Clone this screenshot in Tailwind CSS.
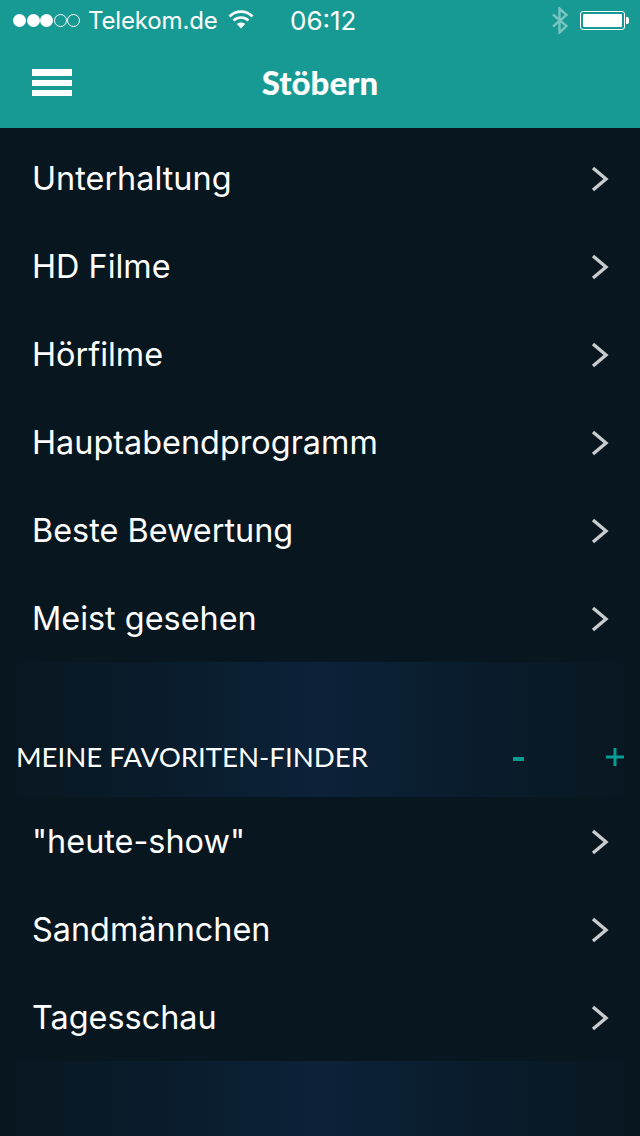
<!DOCTYPE html>
<html lang="de">
<head>
<meta charset="utf-8">
<script src="https://cdn.jsdelivr.net/npm/@tailwindcss/browser@4"></script>
</head>
<body class="w-[640px] h-[1136px] overflow-hidden bg-[#08161f] font-['Inter','Liberation_Sans',sans-serif] text-white">
<header class="h-[128px] bg-[#169a93] relative">
  <div class="h-[40px] flex items-center pl-[13px] relative">
    <div class="flex gap-[0.5px] items-center">
      <span class="w-[13px] h-[13px] rounded-full bg-white"></span>
      <span class="w-[13px] h-[13px] rounded-full bg-white"></span>
      <span class="w-[13px] h-[13px] rounded-full bg-white"></span>
      <span class="w-[13px] h-[13px] rounded-full border border-white"></span>
      <span class="w-[13px] h-[13px] rounded-full border border-white"></span>
    </div>
    <span class="ml-[8px] text-[24px] leading-[40px] font-normal tracking-[-0.15px] mt-[2px]">Telekom.de</span>
    <svg class="ml-[10px] -mt-[3px]" width="26" height="20" viewBox="0 0 26 20" fill="none"><path d="M1.5 7.5C8 1 18 1 24.5 7.5" stroke="white" stroke-width="2.6"/><path d="M5.5 11.5C10 7.5 16 7.5 20.5 11.5" stroke="white" stroke-width="2.6"/><path d="M13 19.5L8.8 15C11 13 15 13 17.2 15Z" fill="white"/></svg>
    <span class="absolute left-[290px] top-[1px] text-[26px] leading-[40px]">06:12</span>
    <svg class="absolute left-[551px] top-[7px]" width="18" height="27" viewBox="0 0 18 27" fill="none"><path d="M2 7.5L15.5 19L8.5 25.5V1.5L15.5 8L2 19.5" stroke="white" stroke-opacity="0.42" stroke-width="2.4"/></svg>
    <div class="absolute left-[580px] top-[11px] w-[45px] h-[19px] rounded-[3px] border border-white p-[2px]"><div class="w-full h-full bg-white rounded-[1px]"></div></div>
    <div class="absolute left-[626px] top-[17px] w-[3px] h-[7px] bg-white rounded-r-[2px]"></div>
  </div>
  <div class="h-[88px] relative flex items-center justify-center">
    <div class="absolute left-[32px] top-[29px] w-[40px] flex flex-col gap-[4px]">
      <span class="h-[7px] bg-white"></span>
      <span class="h-[6px] bg-white"></span>
      <span class="h-[6px] bg-white"></span>
    </div>
    <h1 class="font-['Lato',sans-serif] font-black text-[33px] leading-none -mt-[3px]">Stöbern</h1>
  </div>
</header>
<main>
  <ul class="pt-[6px]">
    <li class="h-[88px] pl-[32px] pr-[31px] pt-[1px] flex items-center justify-between text-[32.4px]"><span class="mt-[2px]">Unterhaltung</span><svg width="18" height="26" viewBox="0 0 18 26" fill="none"><path d="M2 2L15 13L2 24" stroke="#c9ccce" stroke-width="3.4"/></svg></li>
    <li class="h-[88px] pl-[32px] pr-[31px] pt-[1px] flex items-center justify-between text-[32.4px]"><span class="mt-[2px]">HD Filme</span><svg width="18" height="26" viewBox="0 0 18 26" fill="none"><path d="M2 2L15 13L2 24" stroke="#c9ccce" stroke-width="3.4"/></svg></li>
    <li class="h-[88px] pl-[32px] pr-[31px] pt-[1px] flex items-center justify-between text-[32.4px]"><span class="mt-[2px]">Hörfilme</span><svg width="18" height="26" viewBox="0 0 18 26" fill="none"><path d="M2 2L15 13L2 24" stroke="#c9ccce" stroke-width="3.4"/></svg></li>
    <li class="h-[88px] pl-[32px] pr-[31px] pt-[1px] flex items-center justify-between text-[32.4px]"><span class="mt-[2px]">Hauptabendprogramm</span><svg width="18" height="26" viewBox="0 0 18 26" fill="none"><path d="M2 2L15 13L2 24" stroke="#c9ccce" stroke-width="3.4"/></svg></li>
    <li class="h-[88px] pl-[32px] pr-[31px] pt-[1px] flex items-center justify-between text-[32.4px]"><span class="mt-[2px]">Beste Bewertung</span><svg width="18" height="26" viewBox="0 0 18 26" fill="none"><path d="M2 2L15 13L2 24" stroke="#c9ccce" stroke-width="3.4"/></svg></li>
    <li class="h-[88px] pl-[32px] pr-[31px] pt-[1px] flex items-center justify-between text-[32.4px]"><span class="mt-[2px]">Meist gesehen</span><svg width="18" height="26" viewBox="0 0 18 26" fill="none"><path d="M2 2L15 13L2 24" stroke="#c9ccce" stroke-width="3.4"/></svg></li>
  </ul>
  <section class="h-[135px] bg-linear-to-r from-[#08161f] via-[#0b2239] via-50% to-[#08161f] relative flex items-end pb-[24px] pl-[16px]">
    <h2 class="font-['Lato',sans-serif] text-[27.6px] leading-[32px] font-normal">MEINE FAVORITEN-FINDER</h2>
    <svg class="absolute left-[513px] top-[95px]" width="11" height="5" viewBox="0 0 11 5"><rect width="11" height="4" fill="#069c93"/></svg>
    <svg class="absolute left-[606px] top-[86px]" width="18" height="18" viewBox="0 0 18 18"><path d="M9 0V18M0 9H18" stroke="#069c93" stroke-width="3"/></svg>
  </section>
  <ul>
    <li class="h-[88px] pl-[32px] pr-[31px] pt-[1px] flex items-center justify-between text-[32.4px]"><span class="mt-[2px]">"heute-show"</span><svg width="18" height="26" viewBox="0 0 18 26" fill="none"><path d="M2 2L15 13L2 24" stroke="#c9ccce" stroke-width="3.4"/></svg></li>
    <li class="h-[88px] pl-[32px] pr-[31px] pt-[1px] flex items-center justify-between text-[32.4px]"><span class="mt-[2px]">Sandmännchen</span><svg width="18" height="26" viewBox="0 0 18 26" fill="none"><path d="M2 2L15 13L2 24" stroke="#c9ccce" stroke-width="3.4"/></svg></li>
    <li class="h-[88px] pl-[32px] pr-[31px] pt-[1px] flex items-center justify-between text-[32.4px]"><span class="mt-[2px]">Tagesschau</span><svg width="18" height="26" viewBox="0 0 18 26" fill="none"><path d="M2 2L15 13L2 24" stroke="#c9ccce" stroke-width="3.4"/></svg></li>
  </ul>
  <div class="h-[75px] bg-linear-to-r from-[#08161f] via-[#0b2239] via-50% to-[#08161f]"></div>
</main>
</body>
</html>
